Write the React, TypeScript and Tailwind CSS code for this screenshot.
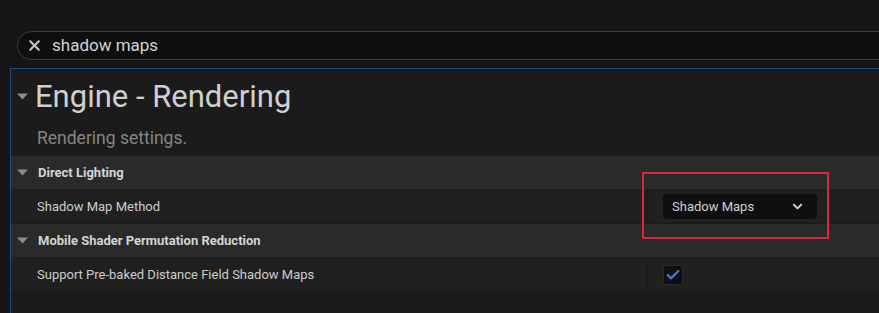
import { Check, ChevronDown, X } from 'lucide-react'

const font = { fontFamily: 'Roboto, "Noto Sans", sans-serif' }

function Caret() {
  return (
    <svg width="11" height="7" viewBox="0 0 11 7" className="shrink-0">
      <path d="M0 0.5h11L5.5 6.5z" fill="#8c8c8c" />
    </svg>
  )
}

function Category({ label }: { label: string }) {
  return (
    <div className="flex h-[34px] items-center gap-[10px] bg-[#2a2a2a] pl-[6px] border-b border-[#1e1e1e]">
      <Caret />
      <span className="text-[13px] font-bold text-[#d4d4d4]">{label}</span>
    </div>
  )
}

function Property({ label, children }: { label: string; children: React.ReactNode }) {
  return (
    <div className="flex h-[34px] items-center bg-[#202020] border-b border-[#1a1a1a]">
      <div className="w-[636px] pl-[26px] text-[13px] text-[#cccccc]">{label}</div>
      <div className="flex h-full flex-1 items-center border-l border-[#1a1a1a] pl-[15px]">{children}</div>
    </div>
  )
}

export default function App() {
  return (
    <div className="relative flex h-[313px] w-[879px] flex-col overflow-hidden bg-[#151515] pt-[31px]" style={font}>
      {/* search */}
      <div className="ml-[17px] -mr-[30px] flex h-[29px] items-center gap-[9px] rounded-full border border-[#3a3a3a] bg-[#0e0e0e] pl-[8px]">
        <X size={17} strokeWidth={3} color="#c4c4c4" />
        <span className="text-[17px] text-[#d2d2d2]">shadow maps</span>
      </div>

      {/* details panel */}
      <div className="mt-[8px] ml-[10px] flex flex-1 flex-col border-l border-t border-[#1e4f82] bg-[#1b1b1b]">
        <div className="flex h-[87px] flex-col">
          <div className="flex items-center gap-[7px] pl-[6px] pt-[9px]">
            <Caret />
            <span className="text-[31px] leading-[37px] text-[#cfcfcf]">Engine - Rendering</span>
          </div>
          <div className="pl-[26px] pt-[10px] text-[17.5px] text-[#858585]">Rendering settings.</div>
        </div>
        <Category label="Direct Lighting" />
        <Property label="Shadow Map Method">
          <div className="flex h-[25px] w-[154px] items-center justify-between rounded-[4px] bg-[#0f0f0f] pl-[9px] pr-[12px] text-[13px] text-[#d0d0d0]">
            <span>Shadow Maps</span>
            <ChevronDown size={15} strokeWidth={3} color="#d6d6d6" />
          </div>
        </Property>
        <Category label="Mobile Shader Permutation Reduction" />
        <Property label="Support Pre-baked Distance Field Shadow Maps">
          <div className="flex h-[20px] w-[20px] items-center justify-center rounded-[3px] border border-[#2a2a2a] bg-[#0f0f0f]">
            <Check size={16} strokeWidth={3.5} color="#2f7fd6" />
          </div>
        </Property>
      </div>

      {/* highlight */}
      <div className="absolute left-[642px] top-[172px] h-[67px] w-[187px] border-2 border-[#d9283b]" />
    </div>
  )
}
